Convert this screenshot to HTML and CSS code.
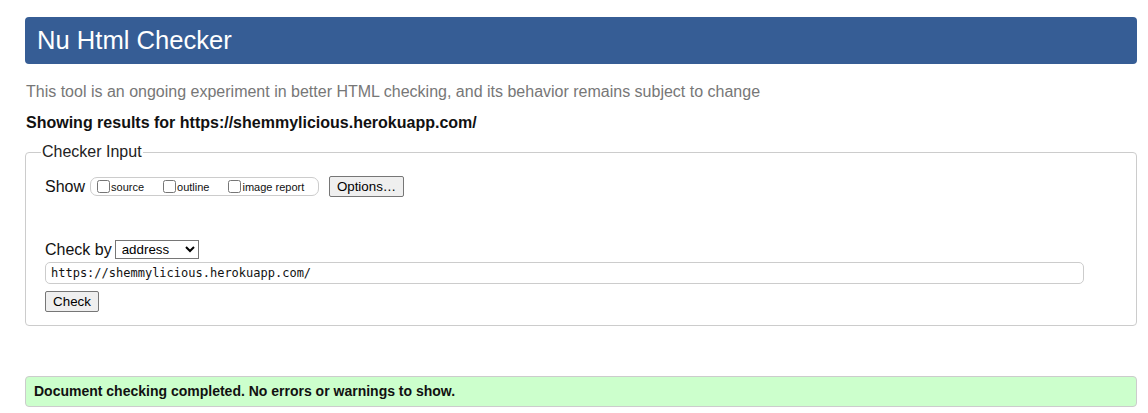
FILE: index.html
```html
<!DOCTYPE html>
<html lang="en">
<head>
<meta charset="utf-8">
<title>Showing results for https://shemmylicious.herokuapp.com/ - Nu Html Checker</title>
<link rel="stylesheet" href="styles.css">
</head>
<body>
<h1 class="title">Nu Html Checker</h1>
<p class="intro">This tool is an ongoing experiment in better HTML checking, and its behavior remains subject to change</p>
<p class="showing">Showing results for https://shemmylicious.herokuapp.com/</p>
<form class="checker">
  <fieldset class="input-set">
    <legend class="legend">Checker Input</legend>
    <div class="show-row">
      <span class="show-label">Show</span>
      <span class="opts">
        <label class="opt opt-source"><input type="checkbox" class="cb">source</label>
        <label class="opt opt-outline"><input type="checkbox" class="cb">outline</label>
        <label class="opt opt-image"><input type="checkbox" class="cb">image report</label>
      </span>
      <button type="button" class="btn btn-options">Options…</button>
    </div>
    <div class="checkby-row">
      <span class="checkby-label">Check by</span>
      <select class="sel">
        <option>address</option>
      </select>
    </div>
    <input type="text" class="url" value="https://shemmylicious.herokuapp.com/">
    <div class="submit-row">
      <button type="button" class="btn btn-check">Check</button>
    </div>
  </fieldset>
</form>
<p class="success">Document checking completed. No errors or warnings to show.</p>
</body>
</html>
```
FILE: styles.css
```css
html, body {
  background: #fff;
}
body {
  margin: 17px 11px 0 25px;
  font-family: "Liberation Sans", Arial, sans-serif;
  font-size: 16px;
  color: #111;
}
.title {
  margin: 0;
  height: 47px;
  line-height: 47px;
  padding-left: 12px;
  background: #365d95;
  color: #fff;
  font-size: 25.6px;
  font-weight: normal;
  border-radius: 4px;
}
.intro {
  margin: 19px 0 0 1px;
  color: #777;
  font-size: 16px;
  line-height: 18px;
}
.showing {
  margin: 13px 0 0 1px;
  font-weight: bold;
  font-size: 16px;
  line-height: 18px;
  color: #111;
}
.checker {
  margin: 11px 0 0 0;
}
.input-set {
  margin: 0;
  padding: 0 0 13px 19px;
  border: 1px solid #ccc;
  border-radius: 4px;
  min-width: 0;
}
.legend {
  margin-left: -4px;
  padding: 0 1px;
  font-size: 16px;
  line-height: 18px;
  color: #222;
}
.show-row {
  display: flex;
  align-items: center;
  margin-top: 15px;
  height: 21px;
}
.show-label {
  font-size: 16px;
  margin-right: 5px;
}
.opts {
  display: flex;
  align-items: center;
  height: 17px;
  border: 1px solid #ccc;
  border-radius: 7px;
  padding: 0 6px 0 6px;
  width: 215px;
  box-sizing: content-box;
}
.opt {
  display: flex;
  align-items: center;
  font-size: 11px;
  color: #111;
}
.opt-source { margin-right: 19px; }
.opt-outline { margin-right: 19px; }
.cb {
  margin: 0 1px 0 0;
  width: 13px;
  height: 13px;
}
.btn {
  font-family: "Liberation Sans", Arial, sans-serif;
  font-size: 13.333px;
  height: 21px;
  padding: 1px 6px;
  border: 1px solid #767676;
  border-radius: 2px;
  background: #efefef;
  color: #000;
}
.btn-options {
  margin-left: 10px;
  width: 75px;
}
.checkby-row {
  display: flex;
  align-items: center;
  margin-top: 43px;
  height: 19px;
}
.checkby-label {
  font-size: 16px;
  margin-right: 3px;
}
.sel {
  font-family: "Liberation Sans", Arial, sans-serif;
  font-size: 13.333px;
  width: 84px;
  height: 19px;
  border: 1px solid #767676;
  border-radius: 0;
  background: #fff;
  color: #000;
  padding: 0 0 0 2px;
}
.url {
  display: block;
  box-sizing: border-box;
  margin-top: 3px;
  width: 1039px;
  height: 22px;
  padding: 0 5px;
  border: 1px solid #ccc;
  border-radius: 5px;
  font-family: "DejaVu Sans Mono", "Liberation Mono", monospace;
  font-size: 12px;
  color: #111;
  background: #fff;
}
.submit-row {
  margin-top: 7px;
  display: flex;
}
.btn-check {
  width: 54px;
}
.success {
  margin: 50px 0 0 0;
  height: 29px;
  line-height: 29px;
  padding-left: 8px;
  background: #ccffcc;
  border: 1px solid #ccc;
  border-radius: 4px;
  font-weight: bold;
  font-size: 14px;
  color: #111;
}
```
